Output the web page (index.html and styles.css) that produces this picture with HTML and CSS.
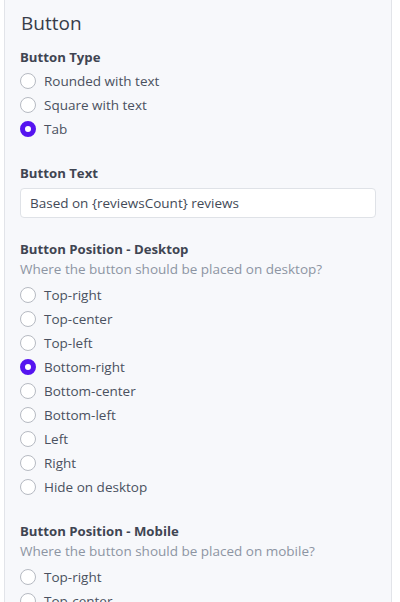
FILE: index.html
```html
<!DOCTYPE html>
<html>
<head>
<meta charset="utf-8">
<link rel="stylesheet" href="styles.css">
</head>
<body>
<div class="card">
  <h2 class="title">Button</h2>
  <div class="section">
    <div class="label">Button Type</div>
    <div class="options">
      <label class="opt"><span class="radio"></span>Rounded with text</label>
      <label class="opt"><span class="radio"></span>Square with text</label>
      <label class="opt"><span class="radio on"></span>Tab</label>
    </div>
  </div>
  <div class="section">
    <div class="label">Button Text</div>
    <div class="input">Based on {reviewsCount} reviews</div>
  </div>
  <div class="section">
    <div class="label">Button Position - Desktop</div>
    <div class="help">Where the button should be placed on desktop?</div>
    <div class="options">
      <label class="opt"><span class="radio"></span>Top-right</label>
      <label class="opt"><span class="radio"></span>Top-center</label>
      <label class="opt"><span class="radio"></span>Top-left</label>
      <label class="opt"><span class="radio on"></span>Bottom-right</label>
      <label class="opt"><span class="radio"></span>Bottom-center</label>
      <label class="opt"><span class="radio"></span>Bottom-left</label>
      <label class="opt"><span class="radio"></span>Left</label>
      <label class="opt"><span class="radio"></span>Right</label>
      <label class="opt"><span class="radio"></span>Hide on desktop</label>
    </div>
  </div>
  <div class="section">
    <div class="label">Button Position - Mobile</div>
    <div class="help">Where the button should be placed on mobile?</div>
    <div class="options">
      <label class="opt"><span class="radio"></span>Top-right</label>
      <label class="opt"><span class="radio"></span>Top-center</label>
      <label class="opt"><span class="radio"></span>Top-left</label>
    </div>
  </div>
</div>
</body>
</html>
```
FILE: styles.css
```css
html, body {
  margin: 0;
  padding: 0;
  background: #ffffff;
  overflow: hidden;
}
body {
  font-family: "Open Sans", "Noto Sans", sans-serif;
  color: #424956;
}
.card {
  margin: -6px 0 0 4px;
  width: 388px;
  background: #f7f8fb;
  border: 1px solid #e2e4e9;
  border-radius: 6px;
  padding: 16px 15px 40px 15px;
  box-sizing: border-box;
  display: flex;
  flex-direction: column;
  gap: 22px;
}
.title {
  margin: 0 0 -10px 1px;
  font-size: 19px;
  line-height: 24px;
  font-weight: 400;
  color: #373d49;
}
.section {
  display: flex;
  flex-direction: column;
}
.label {
  font-size: 13.2px;
  font-weight: 700;
  line-height: 20px;
  color: #3f4552;
}
.help {
  font-size: 13.5px;
  line-height: 20px;
  color: #8d95a3;
}
.options {
  display: flex;
  flex-direction: column;
  margin-top: 2px;
}
.section .help + .options {
  margin-top: 4px;
}
.opt {
  display: flex;
  align-items: center;
  height: 24px;
  font-size: 13.5px;
  color: #4a5160;
}
.radio {
  width: 16px;
  height: 16px;
  box-sizing: border-box;
  border: 1px solid #b6bac2;
  border-radius: 50%;
  background: #fff;
  margin-right: 8px;
  flex: none;
}
.radio.on {
  border: 5px solid #5514f0;
  background: #fff;
}
.input {
  margin-top: 5px;
  margin-bottom: -1px;
  height: 30px;
  width: 356px;
  box-sizing: border-box;
  border: 1px solid #dfe2e7;
  border-radius: 4px;
  background: #fff;
  padding: 0 9px;
  display: flex;
  align-items: center;
  font-size: 13.5px;
  color: #434a57;
}
```
